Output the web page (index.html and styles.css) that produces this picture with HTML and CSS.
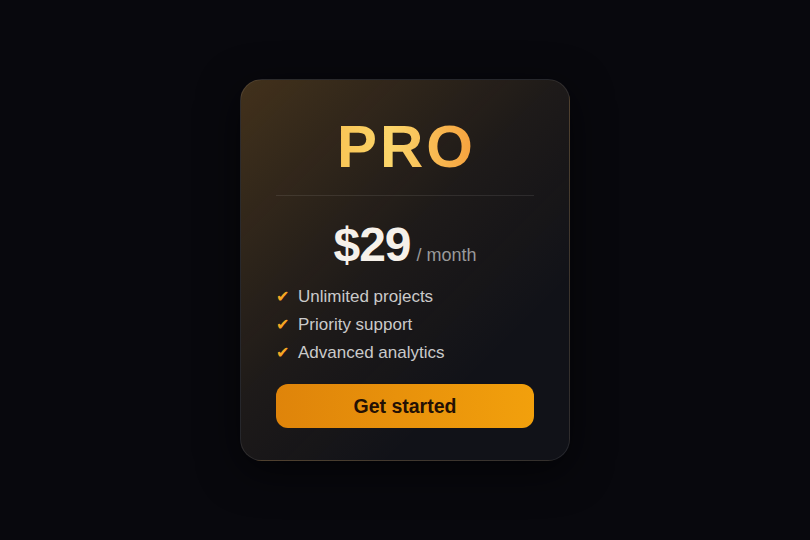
FILE: index.html
```html
<!DOCTYPE html>
<html>
<head>
<meta charset="utf-8">
<link rel="stylesheet" href="styles.css">
</head>
<body>
<div class="page">
  <div class="card">
    <h1 class="plan">PRO</h1>
    <div class="divider"></div>
    <div class="price">
      <span class="amount">$29</span>
      <span class="period">/ month</span>
    </div>
    <ul class="features">
      <li><span class="check">✔</span>Unlimited projects</li>
      <li><span class="check">✔</span>Priority support</li>
      <li><span class="check">✔</span>Advanced analytics</li>
    </ul>
    <button class="cta">Get started</button>
  </div>
</div>
</body>
</html>
```
FILE: styles.css
```css
html, body {
  margin: 0;
  padding: 0;
  height: 100%;
}
body {
  background: #08080d;
  font-family: "Liberation Sans", Arial, sans-serif;
}
.page {
  height: 540px;
  display: flex;
  justify-content: center;
  align-items: flex-start;
  padding-top: 79px;
  box-sizing: border-box;
}
.card {
  width: 330px;
  box-sizing: border-box;
  padding: 37px 35px 32px;
  border-radius: 22px;
  border: 1px solid rgba(255, 255, 255, 0.09);
  background:
    linear-gradient(135deg, rgba(240, 160, 40, 0.22) 0%, rgba(240, 160, 40, 0.06) 45%, rgba(240, 160, 40, 0) 75%),
    #111218;
  box-shadow: 0 10px 40px rgba(0, 0, 0, 0.6);
  display: flex;
  flex-direction: column;
}
.plan {
  margin: 0;
  font-size: 60px;
  line-height: 60px;
  font-weight: 700;
  letter-spacing: 3px;
  text-align: center;
  padding-left: 3px;
  background: linear-gradient(90deg, #f9c454 0%, #fbd56a 40%, #f6a03c 100%);
  -webkit-background-clip: text;
  background-clip: text;
  color: transparent;
  align-self: center;
}
.divider {
  height: 1px;
  background: rgba(255, 255, 255, 0.09);
  margin: 18px 0 25px;
}
.price {
  display: flex;
  justify-content: center;
  align-items: baseline;
  gap: 6px;
}
.amount {
  font-size: 48px;
  line-height: 48px;
  font-weight: 700;
  color: #f6f1ea;
  letter-spacing: -1px;
}
.period {
  font-size: 18px;
  line-height: 18px;
  color: #999999;
}
.features {
  list-style: none;
  margin: 14px 0 0;
  padding: 0;
}
.features li {
  font-size: 17px;
  line-height: 28px;
  color: #cacaca;
  display: flex;
  align-items: center;
}
.check {
  font-family: "DejaVu Sans", sans-serif;
  color: #f5a623;
  font-size: 16px;
  line-height: 28px;
  width: 22px;
}
.cta {
  margin-top: 17px;
  height: 44px;
  border: none;
  border-radius: 12px;
  background: linear-gradient(90deg, #df840a 0%, #f2a00c 100%);
  color: #231004;
  font-family: "Liberation Sans", Arial, sans-serif;
  font-size: 19.5px;
  font-weight: 700;
  cursor: pointer;
}
```
